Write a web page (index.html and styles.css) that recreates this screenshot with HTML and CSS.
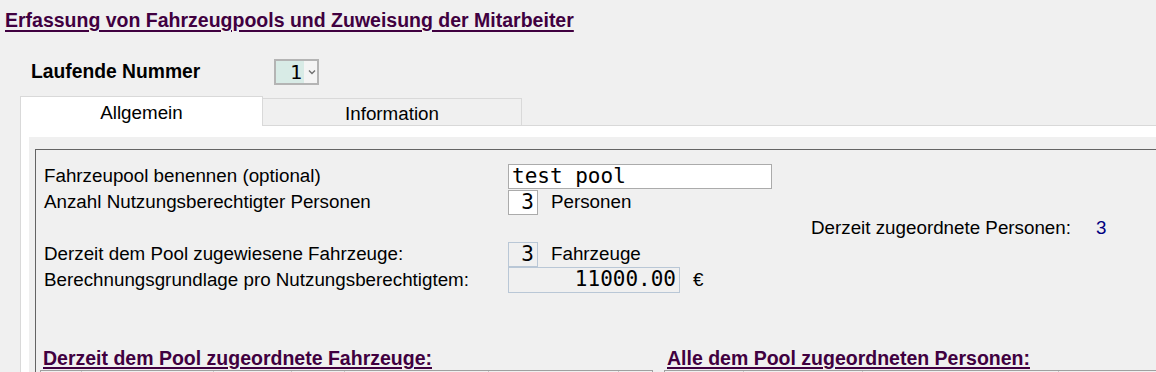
FILE: index.html
```html
<!DOCTYPE html>
<html lang="de">
<head>
  <meta charset="UTF-8" />
  <title>Fahrzeugpools</title>
  <link rel="stylesheet" href="styles.css">
</head>
<body>
  <h1 class="title">Erfassung von Fahrzeugpools und Zuweisung der Mitarbeiter</h1>

  <div class="serial">
    <span class="serial-label">Laufende Nummer</span>
    <div class="combo">
      <span class="combo-value">1</span>
      <svg class="combo-arrow" width="8" height="6" viewBox="0 0 8 6"><path d="M1 1.5 L4 4.5 L7 1.5" fill="none" stroke="#707070" stroke-width="1.4"/></svg>
    </div>
  </div>

  <div class="tabs">
    <div class="tab active">Allgemein</div>
    <div class="tab">Information</div>
    <div class="tab-fill"></div>
  </div>

  <div class="tab-page">
    <div class="page-inner">
      <div class="frame">
        <div class="form">
          <div class="row">
            <span class="label">Fahrzeupool benennen (optional)</span>
            <div class="field wide">test pool</div>
          </div>
          <div class="row">
            <span class="label">Anzahl Nutzungsberechtigter Personen</span>
            <div class="field small num">3</div>
            <span class="unit">Personen</span>
          </div>
          <div class="row assigned">
            <span>Derzeit zugeordnete Personen:</span>
            <span class="assigned-count">3</span>
          </div>
          <div class="row">
            <span class="label">Derzeit dem Pool zugewiesene Fahrzeuge:</span>
            <div class="field small num readonly">3</div>
            <span class="unit">Fahrzeuge</span>
          </div>
          <div class="row">
            <span class="label">Berechnungsgrundlage pro Nutzungsberechtigtem:</span>
            <div class="field money num readonly">11000.00</div>
            <span class="unit">€</span>
          </div>
        </div>

        <div class="lists">
          <div class="list vehicles-list">
            <h2 class="list-title">Derzeit dem Pool zugeordnete Fahrzeuge:</h2>
            <div class="grid-head vehicles">
              <span></span><span></span><span></span><span></span><span></span><span></span><span></span>
            </div>
          </div>
          <div class="list persons-list">
            <h2 class="list-title">Alle dem Pool zugeordneten Personen:</h2>
            <div class="grid-head persons">
              <span></span><span></span><span></span><span></span>
            </div>
          </div>
        </div>
      </div>
    </div>
  </div>
</body>
</html>
```

FILE: styles.css
```css
body {
  margin: 0;
  background: #f0f0f0;
  font-family: 'Liberation Sans', Arial, sans-serif;
  font-size: 18.8px;
  color: #000;
  overflow: hidden;
}

.title {
  margin: 0;
  padding: 8px 0 0 5px;
  font-size: 19.5px;
  line-height: 24px;
  font-weight: bold;
  color: #400040;
  text-decoration: underline;
  text-underline-offset: 3px;
  text-decoration-thickness: 2px;
}

.serial {
  display: flex;
  align-items: center;
  margin: 27px 0 0 31px;
  height: 26px;
}

.serial-label {
  width: 243px;
  font-size: 19.3px;
  font-weight: bold;
}

.combo {
  display: flex;
  align-items: center;
  width: 41px;
  height: 22px;
  border: 2px solid #b4b4b4;
  background: #f4f4f4;
}

.combo-value {
  width: 28px;
  height: 22px;
  background: #d8ebe6;
  font-family: 'DejaVu Sans Mono', monospace;
  font-size: 20px;
  line-height: 23px;
  text-align: right;
  padding-right: 2px;
  box-sizing: border-box;
}

.combo-arrow {
  margin-left: 4px;
}

.tabs {
  display: flex;
  align-items: flex-end;
  margin: 11px 0 0 20px;
  height: 30px;
}

.tab {
  box-sizing: border-box;
  height: 28px;
  width: 259px;
  border: 1px solid #d9d9d9;
  border-left: none;
  text-align: center;
  line-height: 30px;
}

.tab.active {
  width: 243px;
  height: 30px;
  background: #fff;
  border-left: 1px solid #d9d9d9;
  border-bottom: none;
  line-height: 32px;
}

.tab-fill {
  flex: 1;
  border-bottom: 1px solid #d9d9d9;
}

.tab-page {
  margin-left: 20px;
  border-left: 1px solid #d9d9d9;
  background: #fff;
  padding: 11px 0 0 8px;
}

.page-inner {
  background: #f0f0f0;
  padding: 12px 0 0 6px;
}

.frame {
  border-left: 1px solid #646464;
  border-top: 1px solid #646464;
  padding: 13px 0 0 0;
  height: 300px;
}

.form {
  padding-left: 8px;
}

.row {
  display: flex;
  align-items: center;
  height: 26px;
}

.label {
  width: 464px;
}

.field {
  box-sizing: border-box;
  height: 25px;
  background: #fff;
  border: 1px solid #ababab;
  font-family: 'DejaVu Sans Mono', monospace;
  font-size: 21px;
  line-height: 23px;
  padding: 0 3px;
}

.field.wide {
  width: 264px;
}

.field.small {
  width: 30px;
}

.field.money {
  width: 172px;
  height: 26px;
}

.field.num {
  text-align: right;
}

.field.readonly {
  background: #f0f0f0;
  border-color: #b9c7d6;
}

.unit {
  margin-left: 13px;
}

.assigned {
  padding-left: 767px;
}

.assigned-count {
  margin-left: 25px;
  color: #000080;
}

.lists {
  display: flex;
  gap: 11px;
  margin: 55px 0 0 4px;
}

.list {
  flex-shrink: 0;
}

.vehicles-list {
  width: 613px;
}

.persons-list {
  width: 520px;
}

.list-title {
  margin: 0 0 0 3px;
  font-size: 19.5px;
  line-height: 20px;
  font-weight: bold;
  color: #400040;
  text-decoration: underline;
  text-underline-offset: 2px;
  text-decoration-thickness: 2px;
}

.grid-head {
  display: flex;
  height: 22px;
  margin-top: 2px;
  border: 1px solid #a0a0a0;
  background: #f0f0f0;
}

.grid-head span {
  border-right: 1px solid #c8c8c8;
}

.vehicles span:nth-child(1) { width: 40px; }
.vehicles span:nth-child(2) { width: 131px; }
.vehicles span:nth-child(3) { width: 77px; }
.vehicles span:nth-child(4) { width: 52px; }
.vehicles span:nth-child(5) { width: 143px; }
.vehicles span:nth-child(6) { width: 129px; }
.vehicles span:nth-child(7) { flex: 1; border-right: none; }

.persons span:nth-child(1) { width: 78px; }
.persons span:nth-child(2) { width: 118px; }
.persons span:nth-child(3) { width: 195px; }
.persons span:nth-child(4) { flex: 1; border-right: none; }
```
